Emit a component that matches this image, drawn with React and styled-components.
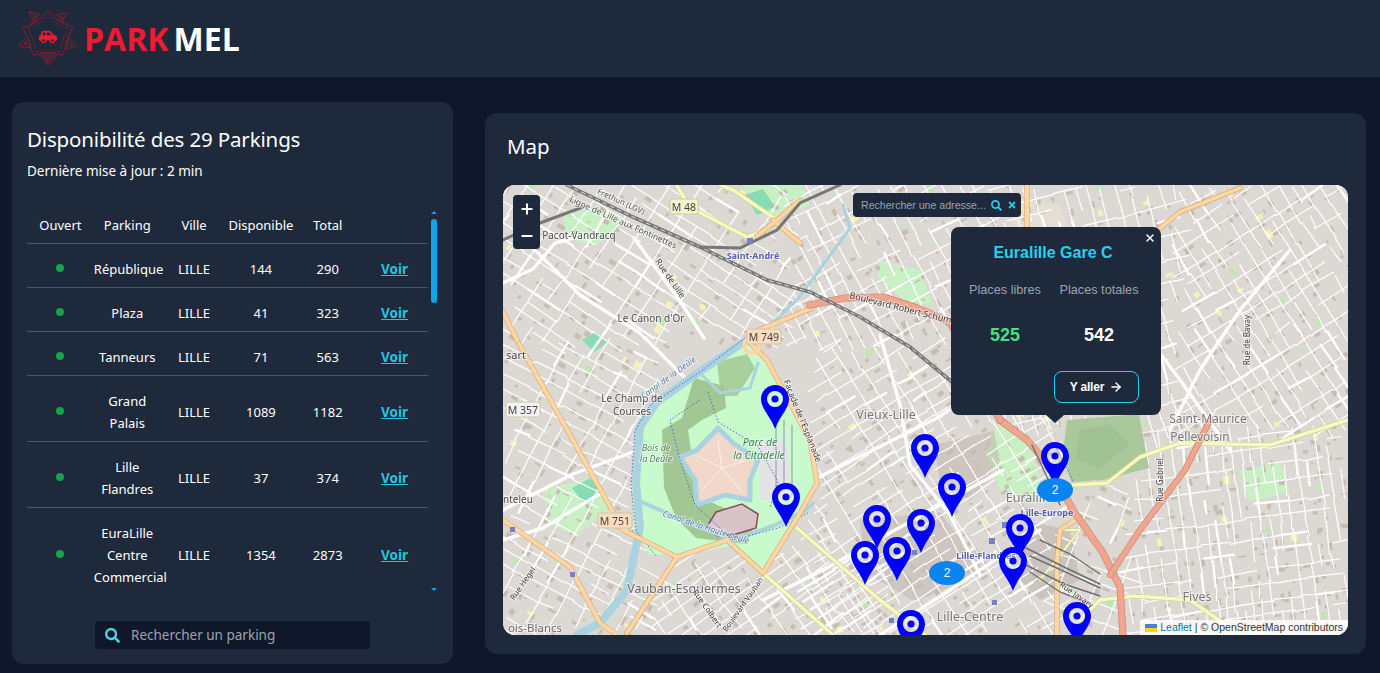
import React, { useMemo } from 'react';
import styled, { createGlobalStyle } from 'styled-components';
import { X, ArrowRight, Plus, Minus } from 'lucide-react';
import { FaCarSide, FaSearch, FaTimes } from 'react-icons/fa';

const GlobalStyle = createGlobalStyle`
  html, body { margin: 0; padding: 0; height: 100%; background: #0f172a; }
  body { font-family: "Noto Sans", "Open Sans", sans-serif; color: #fff; overflow: hidden; }
`;

const Header = styled.header`
  height: 77px;
  background: #1e293b;
  display: flex;
  align-items: center;
  padding-left: 19px;
`;

const Brand = styled.div`
  display: flex;
  align-items: center;
  font-family: "Open Sans", sans-serif;
  font-weight: 700;
  font-size: 32px;
  line-height: 1;
  margin-left: 7px;
  padding-top: 1px;
`;

const BrandRed = styled.span`
  color: #ed1c2e;
  margin-right: 5px;
`;

const Main = styled.main`
  display: grid;
  grid-template-columns: 441px 881px;
  gap: 32px;
  padding: 25px 0 0 12px;
  align-items: start;
`;

const ListPanel = styled.section`
  background: #1e293b;
  border-radius: 12px;
  height: 562px;
  box-sizing: border-box;
  padding: 22px 15px 0;
  display: flex;
  flex-direction: column;
`;

const Title = styled.h2`
  margin: 0;
  font-weight: 400;
  font-size: 20.5px;
  letter-spacing: -0.15px;
  line-height: 30px;
`;

const SubTitle = styled.p`
  margin: 7px 0 0;
  font-size: 13.5px;
  line-height: 20px;
`;

const TableZone = styled.div`
  display: flex;
  gap: 2px;
  margin-top: 28px;
  height: 386px;
`;

const TableClip = styled.div`
  width: 401px;
  overflow: hidden;
`;

const Table = styled.table`
  width: 401px;
  table-layout: fixed;
  border-collapse: collapse;
  font-size: 13px;
  text-align: center;
`;

const Th = styled.th`
  font-weight: 400;
  height: 34px;
  padding: 0 0 2px;
  box-sizing: border-box;
  border-bottom: 1px solid #4b5563;
`;

const Td = styled.td`
  padding: 14px 0 7px;
  line-height: 22px;
  border-bottom: 1px solid #4b5563;
`;

const Dot = styled.span`
  display: block;
  width: 8px;
  height: 8px;
  border-radius: 50%;
  background: #16a34a;
  margin: 0 auto 1px;
`;

const SeeLink = styled.a`
  color: #22c5e0;
  font-weight: 700;
  font-size: 13.5px;
  text-decoration: underline;
`;

const Rail = styled.div`
  width: 8px;
  display: flex;
  flex-direction: column;
  align-items: center;
  justify-content: flex-start;
  padding-top: 2px;
`;

const RailArrow = styled.span`
  width: 0;
  height: 0;
  border-left: 3px solid transparent;
  border-right: 3px solid transparent;
  ${(p) => (p.$down ? 'border-top: 3px solid #0ea5e9; margin-top: 285px;' : 'border-bottom: 3px solid #0ea5e9;')}
`;

const RailThumb = styled.span`
  width: 6px;
  height: 84px;
  border-radius: 3px;
  background: #0ea5e9;
  margin-top: 5px;
`;

const SearchBox = styled.div`
  display: flex;
  align-items: center;
  gap: 11px;
  align-self: center;
  width: 275px;
  height: 28px;
  box-sizing: border-box;
  margin-top: 26px;
  padding-left: 10px;
  background: #0f172a;
  border-radius: 4px;
  color: #9ca3af;
  font-size: 13.5px;
  svg { color: #4dd4e8; flex: none; }
`;

const MapPanel = styled.section`
  background: #1e293b;
  border-radius: 12px;
  height: 541px;
  box-sizing: border-box;
  margin-top: 11px;
  padding: 18px 18px 0;
`;

const MapTitle = styled.h2`
  margin: 0 0 0 4px;
  font-weight: 400;
  font-size: 20.5px;
  line-height: 30px;
`;

const MapFrame = styled.div`
  position: relative;
  width: 845px;
  height: 450px;
  margin-top: 24px;
  border-radius: 12px;
  overflow: hidden;
  background: #dcd8d4;
  font-family: "Liberation Sans", sans-serif;
`;

const MapArt = styled.svg`
  display: block;
  filter: blur(0.3px);
`;

const ZoomBar = styled.div`
  position: absolute;
  left: 10px;
  top: 10px;
  width: 27px;
  height: 54px;
  background: #1e293b;
  border-radius: 4px;
  display: flex;
  flex-direction: column;
  align-items: center;
  justify-content: space-around;
  color: #fff;
`;

const AddressSearch = styled.div`
  position: absolute;
  left: 350px;
  top: 8px;
  width: 168px;
  height: 24px;
  background: #1e293b;
  border-radius: 4px;
  display: flex;
  align-items: center;
  gap: 5px;
  box-sizing: border-box;
  padding-left: 8px;
  color: #9ca3af;
  font-size: 10.6px;
  white-space: nowrap;
  svg { color: #22d3ee; flex: none; }
`;

const Popup = styled.div`
  position: absolute;
  left: 448px;
  top: 42px;
  width: 210px;
  height: 188px;
  background: #1e293b;
  border-radius: 8px;
  box-sizing: border-box;
  padding-top: 16px;
  text-align: center;
  &::after {
    content: '';
    position: absolute;
    left: 95px;
    bottom: -8px;
    border-left: 9px solid transparent;
    border-right: 9px solid transparent;
    border-top: 8px solid #1e293b;
  }
`;

const PopupClose = styled.span`
  position: absolute;
  right: 5px;
  top: 5px;
  color: #fff;
  display: flex;
`;

const PopupTitle = styled.div`
  color: #22d3ee;
  font-weight: 700;
  font-size: 16px;
  line-height: 20px;
  margin-right: 6px;
`;

const Stats = styled.div`
  display: grid;
  grid-template-columns: 94px 94px;
  justify-content: center;
  margin-top: 19px;
  margin-right: 8px;
`;

const StatLabel = styled.div`
  color: #9ca3af;
  font-size: 12.7px;
  line-height: 16px;
`;

const StatValue = styled.div`
  color: ${(p) => (p.$free ? '#4ade80' : '#fff')};
  font-weight: 700;
  font-size: 18px;
  line-height: 22px;
  margin-top: 26px;
`;

const GoButton = styled.button`
  display: flex;
  align-items: center;
  justify-content: center;
  gap: 5px;
  width: 85px;
  height: 32px;
  margin: 25px 22px 0 auto;
  background: transparent;
  border: 1px solid #22d3ee;
  border-radius: 8px;
  color: #fff;
  font-family: inherit;
  font-weight: 700;
  font-size: 12px;
  letter-spacing: -0.2px;
`;

const PinSpot = styled.div`
  position: absolute;
  left: ${(p) => p.$x - 503 - 14}px;
  top: ${(p) => p.$y - 185}px;
  width: 28px;
  height: 44px;
  display: flex;
`;

const Cluster = styled.div`
  position: absolute;
  left: ${(p) => p.$x - 503 - 18}px;
  top: ${(p) => p.$y - 185 - 12}px;
  width: 36px;
  height: 24px;
  border-radius: 50%;
  background: #0a84f0;
  color: #fff;
  font-size: 12px;
  line-height: 24px;
  text-align: center;
`;

const Attribution = styled.div`
  position: absolute;
  right: 0;
  bottom: 0;
  height: 15px;
  padding: 0 5px;
  background: rgba(255, 255, 255, 0.82);
  color: #333;
  font-size: 10.5px;
  line-height: 15px;
  display: flex;
  align-items: center;
  gap: 3px;
  white-space: nowrap;
`;

const LeafletLink = styled.a`
  color: #0078a8;
`;

const LogoWrap = styled.div`
  position: relative;
  width: 58px;
  height: 58px;
  flex: none;
`;

const LogoCar = styled.span`
  position: absolute;
  left: 20px;
  top: 18px;
  color: #ed1c2e;
  display: flex;
`;

const rows = [
  ['République', '144', '290'],
  ['Plaza', '41', '323'],
  ['Tanneurs', '71', '563'],
  ['Grand Palais', '1089', '1182'],
  ['Lille Flandres', '37', '374'],
  ['EuraLille Centre Commercial', '1354', '2873'],
];

const pins = [
  [775, 385], [786, 483], [925, 434], [952, 473], [877, 505], [921, 509],
  [897, 537], [865, 541], [1020, 514], [1013, 547], [1055, 442], [911, 610], [1077, 602],
];

const PARK = [
  [745, 340], [700, 372], [655, 405], [637, 430], [632, 480], [634, 530], [650, 555],
  [700, 552], [735, 545], [763, 572], [800, 518], [817, 485], [812, 440], [790, 400], [768, 360],
];

const WOOD = [[1067, 420], [1139, 414], [1149, 468], [1103, 480], [1071, 482], [1063, 452]];

const toPoints = (list) => list.map((p) => p.join(',')).join(' ');

const inside = (x, y, poly) => {
  let hit = false;
  for (let i = 0, j = poly.length - 1; i < poly.length; j = i++) {
    const [xi, yi] = poly[i];
    const [xj, yj] = poly[j];
    if (yi > y !== yj > y && x < ((xj - xi) * (y - yi)) / (yj - yi) + xi) hit = !hit;
  }
  return hit;
};

const zones = [
  { box: [503, 185, 790, 345], angle: 33, gap: 14 },
  { box: [503, 345, 660, 635], angle: 28, gap: 14 },
  { box: [660, 555, 880, 635], angle: -35, gap: 12 },
  { box: [790, 185, 1000, 345], angle: 62, gap: 13 },
  { box: [815, 345, 1060, 635], angle: -32, gap: 12 },
  { box: [1000, 185, 1180, 430], angle: 75, gap: 13 },
  { box: [1130, 430, 1348, 635], angle: 82, gap: 11 },
  { box: [1180, 185, 1348, 430], angle: 58, gap: 12 },
  { box: [1060, 480, 1130, 635], angle: 20, gap: 18 },
];

// Street mesh: seeded so the picture is the same on each load
const buildStreets = () => {
  let seed = 4711;
  const rnd = () => {
    seed = (seed * 16807) % 2147483647;
    return seed / 2147483647;
  };
  const streets = [];
  const blocks = [];
  const greens = [];
  zones.forEach(({ box, angle, gap }) => {
    const [x0, y0, x1, y1] = box;
    const cx = (x0 + x1) / 2;
    const cy = (y0 + y1) / 2;
    const reach = Math.hypot(x1 - x0, y1 - y0) / 2;
    [angle, angle + 90].forEach((deg, family) => {
      const a = (deg * Math.PI) / 180;
      const ux = Math.cos(a);
      const uy = Math.sin(a);
      const step = family ? gap * 1.5 : gap;
      for (let off = -reach; off < reach; off += step * (0.7 + rnd() * 0.6)) {
        let t = -reach + rnd() * 20;
        while (t < reach) {
          const len = 12 + rnd() * 30;
          const tilt = (rnd() - 0.5) * 4;
          const ax = cx + ux * t - uy * off;
          const ay = cy + uy * t + ux * off;
          const bx = ax + ux * len - uy * tilt;
          const by = ay + uy * len + ux * tilt;
          const mx = (ax + bx) / 2;
          const my = (ay + by) / 2;
          const inMap = mx > x0 && mx < x1 && my > y0 && my < y1;
          if (inMap && !inside(mx, my, PARK) && !inside(mx, my, WOOD)) {
            if (rnd() > 0.22) {
              streets.push({ d: `M${ax.toFixed(1)} ${ay.toFixed(1)}L${bx.toFixed(1)} ${by.toFixed(1)}`, w: rnd() > 0.88 ? 2.4 : 1.2 });
            }
            if (rnd() > 0.25) {
              blocks.push({ x: mx + 1 + rnd() * 4, y: my + 1 + rnd() * 4, w: 2 + rnd() * 6, h: 1.5 + rnd() * 3.5, r: deg });
            }
            if (rnd() > 0.94) {
              greens.push({ x: mx + 2, y: my - 6, w: 3 + rnd() * 6, h: 3 + rnd() * 4, r: deg, c: rnd() > 0.5 ? '#bfe8b0' : '#f7f1b4' });
            }
          }
          t += len;
        }
      }
    });
  });
  return { streets, blocks, greens };
};

const Road = ({ d, color, edge, w }) => (
  <g fill="none" strokeLinecap="round" strokeLinejoin="round">
    <path d={d} stroke={edge} strokeWidth={w + 1.2} />
    <path d={d} stroke={color} strokeWidth={w} />
  </g>
);

const Shield = ({ x, y, w, label, tint }) => (
  <g>
    <rect x={x - w / 2} y={y - 8} width={w} height={15} rx={2} fill={tint} stroke="#cfc8a8" />
    <text x={x} y={y + 3.5} fontSize="10.5" fill="#444" textAnchor="middle">{label}</text>
  </g>
);

const Label = ({ x, y, size = 10, color = '#4a4a4a', rotate, weight, italic, children }) => (
  <text
    x={x}
    y={y}
    fontSize={size}
    fill={color}
    textAnchor="middle"
    fontWeight={weight}
    fontStyle={italic ? 'italic' : undefined}
    stroke="#fff"
    strokeOpacity="0.55"
    strokeWidth="2"
    paintOrder="stroke"
    transform={rotate ? `rotate(${rotate} ${x} ${y})` : undefined}
  >
    {children}
  </text>
);

const MapDrawing = () => {
  const { streets, blocks, greens } = useMemo(buildStreets, []);
  return (
    <MapArt width="845" height="450" viewBox="503 185 845 450" fontFamily="'Noto Sans', sans-serif">
      <rect x="503" y="185" width="845" height="450" fill="#dcd8d4" />
      {/* sports and green patches under the streets */}
      <g fill="#c8f0c4">
        <path d="M563 214l40-8 22 16-30 24-28-8z" />
        <path d="M1000 420l30 20 15 60-45-8-14-40z" />
        <path d="M880 260l40 10 14 36-30-6-26-22z" />
        <path d="M1240 470l40-8 10 30-40 10z" />
        <path d="M545 490l50-14 20 30-40 30-28-14z" />
        <path d="M742 185l60 0 8 20-40 15z" />
      </g>
      <g fill="#88dcb4">
        <path d="M745 195l18-6 12 18-18 8z" />
        <path d="M572 488l18-10 14 14-18 14z" />
        <path d="M582 340l14-8 12 10-14 10z" />
      </g>
      <path d="M934 445l60-14 6 30-30 40-30-20z" fill="#bdb2a8" opacity="0.5" />
      <path d="M860 520l80-8 45 60-70 30-50-30z" fill="#bdb2a8" opacity="0.45" />
      <path d="M1020 520l50 10 10 50-40 20-30-30z" fill="#b9aea6" opacity="0.5" />
      <path d="M1000 195l60 10 10 30-40 20z" fill="#f2e9d8" opacity="0.4" />
      <g fill="#c9bcb1">
        {blocks.map((b, i) => (
          <rect key={i} x={b.x} y={b.y} width={b.w} height={b.h} transform={`rotate(${b.r} ${b.x} ${b.y})`} />
        ))}
      </g>
      {greens.map((b, i) => (
        <rect key={i} x={b.x} y={b.y} width={b.w} height={b.h} fill={b.c} transform={`rotate(${b.r} ${b.x} ${b.y})`} />
      ))}
      <g stroke="#fff" fill="none" strokeLinecap="round">
        {streets.map((s, i) => (
          <path key={i} d={s.d} strokeWidth={s.w} />
        ))}
      </g>
      <polygon points={toPoints(WOOD)} fill="#a9c99a" />
      <path d="M1080 430l30-6 20 20-30 24-24-8z" fill="#9dbd90" opacity="0.7" />
      {/* wider white avenues */}
      <g stroke="#fff" fill="none" strokeWidth="3.4" strokeLinecap="round" strokeLinejoin="round">
        <path d="M503 283l30-14 22-26 28-8" />
        <path d="M530 245l50 50 60 38 45 45" />
        <path d="M634 238l48 66 22 34" />
        <path d="M503 510l70-36 60-22" />
        <path d="M817 478l120-60 60-40 60-20" />
        <path d="M880 335l20 70 10 60 40 50 30 60" />
        <path d="M763 600l60-30 90-50 90-50" />
        <path d="M880 635l70-45 90-60" />
        <path d="M503 540l40-12 60-36" />
        <path d="M1120 300l60 80 50 70" />
        <path d="M1290 250l-50 60-40 60-30 60" />
      </g>
      {/* citadel */}
      <polygon points={toPoints(PARK)} fill="#c8facc" />
      <path d="M717 362l30-8 8 14-18 28-16 0z" fill="#a9cf9c" />
      <path d="M662 430l20-12 12-40 30 8 2 22-24 12-14 10 6 40 12 30 50 22-10 22-50-6-20-20-12-30z" fill="#a3c794" />
      <path d="M718 428l15 15 25 17-8 20 0 20-25-5-28 10-2-25-15-23 17-7z" fill="#f2d7cb" stroke="#aad3df" strokeWidth="5" strokeLinejoin="round" />
      <path d="M718 440l4 28m-24-12l24 12m24-8l-24 8m20 24l-20-24m-20 22l20-22" stroke="#fff" strokeWidth="0.7" fill="none" />
      <path d="M716 512l26-8 16 10-2 14-20 6-18 2-12-8z" fill="#d8c4c8" stroke="#8a4a5c" strokeWidth="1.5" />
      <path d="M760 440h26l6 60-32 0z" fill="#e3e3e6" />
      <path d="M784 420v70M792 425v70M776 420v70" stroke="#a9a9bb" strokeWidth="1.4" />
      <g fill="none" stroke="#aad3df" strokeLinejoin="round" strokeLinecap="round">
        <path d="M747 340l-45 30-45 32-17 25-4 55 4 45-13 63-27 33-23 12" strokeWidth="8" />
        <path d="M637 500l50 22 46 18 40-14 30-14 10-8" strokeWidth="4" />
        <path d="M700 373l20 20 30-5 8-25" strokeWidth="3" />
        <path d="M757 337l40-37 43-58 10-14-7-23" strokeWidth="3" />
      </g>
      <g fill="none" stroke="#3b5bdb" strokeWidth="0.9" strokeDasharray="1.5 2">
        <path d="M745 338l-45 34-50 33-15 26-4 55 5 45 20 25" />
        <path d="M700 400l-30 20 10 40 15 45 38 35 45-12 30-15" />
        <path d="M708 392l10 30 40 24 20 36-8 26" />
        <path d="M1076 487l-20-40" />
      </g>
      {/* yellow, orange and trunk roads */}
      <Road d="M677 186l13 21 30 16 27 14 20-7 10-10-44-30-13-5" color="#f7fabf" edge="#c9cd8e" w={3.5} />
      <Road d="M797 528l83 72 45 35M763 573l70 62" color="#f7fabf" edge="#c9cd8e" w={3.5} />
      <Road d="M1073 485l34-2 33-26 40-14 90 2 78-25" color="#f7fabf" edge="#c9cd8e" w={3.5} />
      <Road d="M1135 596l55 4 50 35M1080 620l20-20 35-4" color="#f7fabf" edge="#c9cd8e" w={3.5} />
      <Road d="M1040 580l40-50-20 0" color="#f7fabf" edge="#c9cd8e" w={2} />
      <Road d="M517 340l106 190 54 27 50-17 36 33 37-60 17-30-7-43-20-37-23-43-20-20M503 520l67 47 30 56 17 12M677 557l-50 76M627 530l-20-8" color="#fcd6a4" edge="#d9a770" w={4} />
      <Road d="M517 340l-20-40M773 220l27 23M800 200l-23 20-20 16M1080 517l-20 13-3 30v75M752 333l60-25M1027 185v45M1160 228l20-16 60-24" color="#fcd6a4" edge="#d9a770" w={4} />
      <circle cx="752" cy="345" r="8" fill="none" stroke="#fcd6a4" strokeWidth="4" />
      <Road d="M1000 420l27 20 20 23 26 47 30 43 17 34 3 48" color="#f0a58e" edge="#c9806c" w={6} />
      <Road d="M810 305l35-7 38-1 34 11 33 14 50 98" color="#f0a58e" edge="#c9806c" w={6} />
      <Road d="M1110 575l30-45 45-60 25-50" color="#f0a58e" edge="#c9806c" w={5} />
      <g fill="none" strokeLinecap="round">
        <path d="M567 185l66 32 67 30 67 33 43 12 50 25 50 30 60 50" stroke="#777" strokeWidth="3.6" />
        <path d="M567 185l66 32 67 30 67 33 43 12 50 25 50 30 60 50" stroke="#ddd" strokeWidth="1" strokeDasharray="4 4" />
        <path d="M503 240l37-17 43-16" stroke="#777" strokeWidth="3" />
        <path d="M700 247l40 1 37-18 23-27 40-18" stroke="#777" strokeWidth="3" />
        <path d="M1026 548l40 20 34 16M1030 556l40 18 30 14M1024 564l40 20 36 12M1030 572l30 20 30 12M1060 505l-28-60M1040 540l30 14 30 20" stroke="#6e6e6e" strokeWidth="1.4" />
      </g>
      {/* metro stops */}
      <g fill="#7880c4">
        <rect x="747" y="238" width="6" height="6" />
        <rect x="1002" y="522" width="6" height="6" />
        <rect x="989" y="538" width="6" height="6" />
        <rect x="912" y="550" width="5" height="5" />
        <rect x="992" y="600" width="5" height="5" />
        <rect x="889" y="618" width="5" height="5" />
        <rect x="510" y="527" width="5" height="5" />
        <rect x="570" y="572" width="5" height="5" />
      </g>
      <Shield x={684} y={207} w={28} label="M 48" tint="#f4f5ce" />
      <Shield x={764} y={337} w={34} label="M 749" tint="#f9dcc0" />
      <Shield x={523} y={410} w={34} label="M 357" tint="#f2f2f2" />
      <Shield x={615} y={521} w={34} label="M 751" tint="#f9dcc0" />
      <Label x={579} y={239}>Pacot-Vandracq</Label>
      <Label x={651} y={322}>Le Canon d'Or</Label>
      <Label x={753} y={259} color="#5a5fb0" weight="700" size={9}>Saint-André</Label>
      <Label x={516} y={359} size={11}>sart</Label>
      <Label x={632} y={402}>Le Champ de</Label>
      <Label x={632} y={415}>Courses</Label>
      <Label x={760} y={446} size={10.5} color="#2e8b4f" italic>Parc de</Label>
      <Label x={759} y={459} size={10.5} color="#2e8b4f" italic>la Citadelle</Label>
      <Label x={656} y={451} size={9} color="#5b7a5b" italic>Bois de</Label>
      <Label x={656} y={462} size={9} color="#5b7a5b" italic>la Deûle</Label>
      <Label x={684} y={593} size={12.5} color="#6b6b6b">Vauban-Esquermes</Label>
      <Label x={535} y={632} size={11.5} color="#6b6b6b">ois-Blancs</Label>
      <Label x={518} y={503} size={10}>nteleu</Label>
      <Label x={886} y={419} size={12.5} color="#777">Vieux-Lille</Label>
      <Label x={1029} y={502} size={12.5} color="#777">Euralille</Label>
      <Label x={1047} y={516} size={9} color="#5a5fb0" weight="700">Lille-Europe</Label>
      <Label x={986} y={559} size={9} color="#5a5fb0" weight="700">Lille-Flandres</Label>
      <Label x={970} y={621} size={12.5} color="#777">Lille-Centre</Label>
      <Label x={1208} y={423} size={12} color="#777">Saint-Maurice</Label>
      <Label x={1200} y={441} size={12} color="#777">Pellevoisin</Label>
      <Label x={1197} y={601} size={12.5} color="#777">Fives</Label>
      <Label x={905} y={312} size={9} color="#3c3c3c" rotate={14}>Boulevard Robert Schuman</Label>
      <Label x={800} y={422} size={8.5} color="#3c3c3c" rotate={68}>Façade de l'Esplanade</Label>
      <Label x={670} y={380} size={8.5} color="#5a7fa8" italic rotate={-36}>Canal de la Deûle</Label>
      <Label x={705} y={530} size={8.5} color="#5a7fa8" italic rotate={18}>Canal de la Haute Deûle</Label>
      <Label x={668} y={280} size={8.5} color="#3c3c3c" rotate={55}>Rue de Lille</Label>
      <Label x={620} y={204} size={8} color="#555" rotate={25}>Frethun (LGV)</Label>
      <Label x={622} y={225} size={8.5} color="#555" rotate={24}>Ligne de Lille aux Fontinettes</Label>
      <Label x={705} y={610} size={8} color="#3c3c3c" rotate={55}>Rue Colbert</Label>
      <Label x={745} y={606} size={7.5} color="#3c3c3c" rotate={-55}>Boulevard Vauban</Label>
      <Label x={525} y={585} size={8} color="#3c3c3c" rotate={-55}>Rue Hegel</Label>
      <Label x={1075} y={597} size={8} color="#3c3c3c" rotate={35}>Rue Javary</Label>
      <Label x={1163} y={480} size={8} color="#3c3c3c" rotate={-90}>Rue Gabriel</Label>
      <Label x={1250} y={340} size={8} color="#3c3c3c" rotate={-90}>Rue de Bavay</Label>
    </MapArt>
  );
};

const MapPin = () => (
  <svg width="28" height="44" viewBox="0 0 28 44">
    <path
      fillRule="evenodd"
      fill="#0000ff"
      d="M14 0C6.3 0 0 6.2 0 14c0 10 10 18 14 30 4-12 14-20 14-30C28 6.2 21.7 0 14 0zm0 6a8 8 0 1 1 0 16 8 8 0 0 1 0-16z"
    />
    <circle cx="14" cy="14" r="8" fill="#fff" opacity="0.22" />
    <circle cx="14" cy="14" r="3.6" fill="#0000ff" />
  </svg>
);

// Traced by hand: star outline with the small tags at each tip
const LogoMark = () => (
  <svg width="58" height="58" viewBox="0 0 58 58" fill="none" stroke="#8a1c2e" strokeWidth="1">
    <path d="M29 0l10 11 15 6-6 13-4 15-15-2-15 2-4-15-6-12 15-7z" />
    <path d="M29 4l8 9 12 5-5 11-3 13-12-2-12 2-3-13-5-11 12-5z" opacity="0.6" />
    <path d="M10 2l10 2-5 8zM15 5l2 1-2 3zM48 3l-11 2 6 7zM43 6l-2 1 2 2z" />
    <path d="M0 36l6-8 5 10zM5 33l1-1 1 3zM58 36l-9-9-1 12zM54 35l-3-3 0 4z" />
    <path d="M29 56l-5-8h11zM29 53l-2-3h4z" />
    <path d="M20 46h18M21 43h16M12 14l5-3M46 14l-5-3" />
  </svg>
);

const App = () => (
  <>
    <GlobalStyle />
    <Header>
      <LogoWrap>
        <LogoMark />
        <LogoCar><FaCarSide size={18} /></LogoCar>
      </LogoWrap>
      <Brand>
        <BrandRed>PARK</BrandRed>MEL
      </Brand>
    </Header>
    <Main>
      <ListPanel>
        <Title>Disponibilité des 29 Parkings</Title>
        <SubTitle>Dernière mise à jour : 2 min</SubTitle>
        <TableZone>
          <TableClip>
            <Table>
              <thead>
                <tr>
                  <Th>Ouvert</Th>
                  <Th>Parking</Th>
                  <Th>Ville</Th>
                  <Th>Disponible</Th>
                  <Th>Total</Th>
                  <Th />
                </tr>
              </thead>
              <tbody>
                {rows.map(([name, free, total]) => (
                  <tr key={name}>
                    <Td><Dot /></Td>
                    <Td>{name}</Td>
                    <Td>LILLE</Td>
                    <Td>{free}</Td>
                    <Td>{total}</Td>
                    <Td><SeeLink href="#">Voir</SeeLink></Td>
                  </tr>
                ))}
              </tbody>
            </Table>
          </TableClip>
          <Rail>
            <RailArrow />
            <RailThumb />
            <RailArrow $down />
          </Rail>
        </TableZone>
        <SearchBox>
          <FaSearch size={15} />
          Rechercher un parking
        </SearchBox>
      </ListPanel>
      <MapPanel>
        <MapTitle>Map</MapTitle>
        <MapFrame>
          <MapDrawing />
          {pins.map(([x, y]) => (
            <PinSpot key={`${x}-${y}`} $x={x} $y={y}><MapPin /></PinSpot>
          ))}
          <Cluster $x={1055} $y={490}>2</Cluster>
          <Cluster $x={947} $y={573}>2</Cluster>
          <ZoomBar>
            <Plus size={16} strokeWidth={3} />
            <Minus size={16} strokeWidth={3} />
          </ZoomBar>
          <AddressSearch>
            Rechercher une adresse...
            <FaSearch size={11} />
            <FaTimes size={10} />
          </AddressSearch>
          <Popup>
            <PopupClose><X size={12} strokeWidth={3} /></PopupClose>
            <PopupTitle>Euralille Gare C</PopupTitle>
            <Stats>
              <StatLabel>Places libres</StatLabel>
              <StatLabel>Places totales</StatLabel>
              <StatValue $free>525</StatValue>
              <StatValue>542</StatValue>
            </Stats>
            <GoButton>Y aller <ArrowRight size={14} strokeWidth={2.5} /></GoButton>
          </Popup>
          <Attribution>
            <svg width="12" height="8" viewBox="0 0 12 8">
              <rect width="12" height="4" fill="#4c7be1" />
              <rect y="4" width="12" height="4" fill="#ffd500" />
            </svg>
            <LeafletLink>Leaflet</LeafletLink> | © OpenStreetMap contributors
          </Attribution>
        </MapFrame>
      </MapPanel>
    </Main>
  </>
);

export default App;
